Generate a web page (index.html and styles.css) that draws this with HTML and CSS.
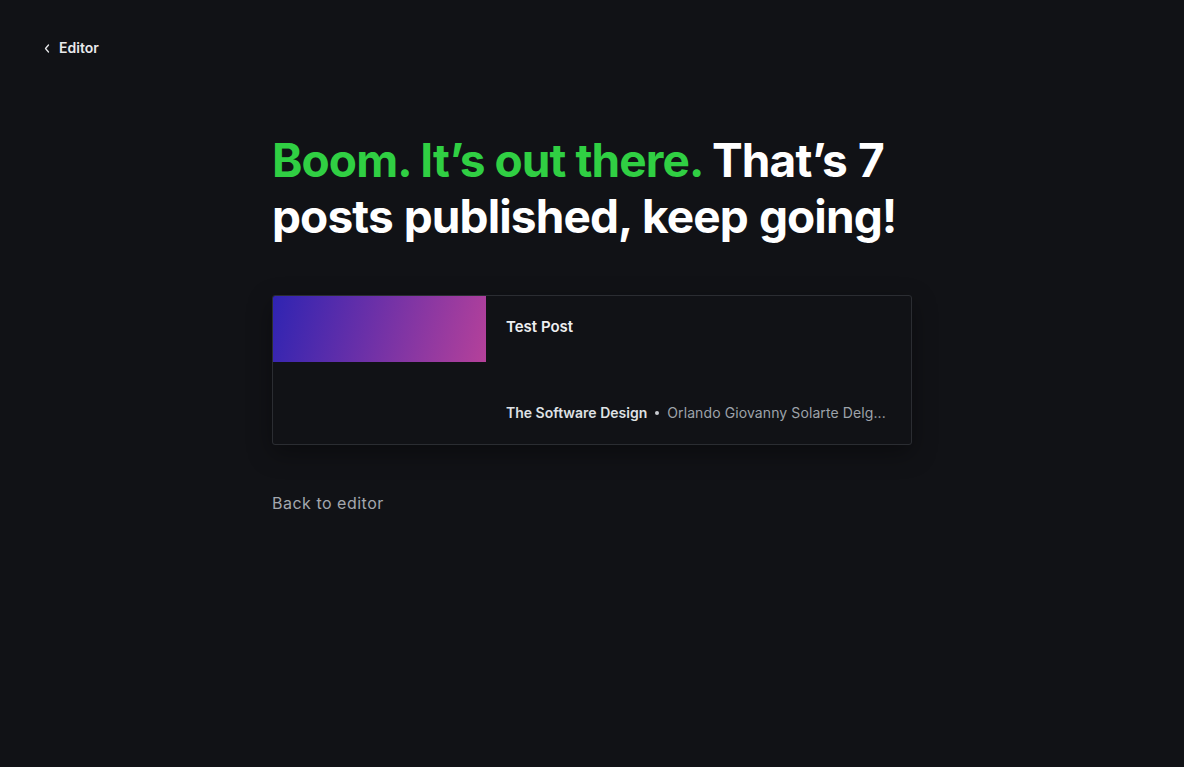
FILE: index.html
```html
<!DOCTYPE html>
<html>
<head>
<meta charset="utf-8">
<link rel="stylesheet" href="styles.css">
</head>
<body>
<div class="page">
  <header class="topbar">
    <a class="back-link" href="#">
      <svg class="chev" width="6" height="9" viewBox="0 0 6 9"><path d="M4.5 1 L1.5 4.5 L4.5 8" fill="none" stroke="#e6e7e9" stroke-width="1.3" stroke-linecap="round" stroke-linejoin="round"/></svg>
      <span>Editor</span>
    </a>
  </header>
  <main class="main">
    <h1 class="headline"><span class="green">Boom. It’s out there. </span><span class="white">That’s 7 posts published, keep going!</span></h1>
    <div class="card">
      <div class="thumb-col"><div class="thumb"></div></div>
      <div class="card-body">
        <div class="card-title">Test Post</div>
        <div class="card-meta"><span class="pub">The Software Design</span><span class="dot"></span><span class="author">Orlando Giovanny Solarte Delg...</span></div>
      </div>
    </div>
    <a class="back-editor" href="#">Back to editor</a>
  </main>
</div>
</body>
</html>
```
FILE: styles.css
```css
html, body {
  margin: 0;
  padding: 0;
  background: #111216;
  height: 100%;
}
body {
  font-family: Inter, "Noto Sans", sans-serif;
  color: #ffffff;
}
a { text-decoration: none; }
.page {
  min-height: 767px;
}
.topbar {
  padding: 37px 0 0 44px;
  height: 21px;
}
.back-link {
  display: inline-flex;
  align-items: center;
  gap: 9px;
  color: #e8e9eb;
  font-size: 14px;
  font-weight: 600;
  line-height: 18px;
}
.chev { margin-top: 1px; }
.main {
  width: 640px;
  margin: 0 auto;
  padding-top: 74px;
}
.headline {
  margin: 0;
  font-size: 46px;
  line-height: 56px;
  font-weight: 700;
  letter-spacing: -0.9px;
  color: #ffffff;
}
.green { color: #30cf43; }
.white { color: #ffffff; word-spacing: 1px; }
.card {
  margin-top: 51px;
  border: 1px solid #2b2d32;
  border-radius: 3px;
  display: flex;
  height: 148px;
  box-shadow: 0 8px 24px rgba(0,0,0,0.35);
  overflow: hidden;
}
.thumb-col {
  width: 213px;
  flex: none;
}
.thumb {
  height: 66px;
  background: linear-gradient(105deg, #2f24b2 0%, #6b30a8 45%, #b5419a 100%);
}
.card-body {
  flex: 1;
  padding: 21px 24px 21px 20px;
  display: flex;
  flex-direction: column;
  justify-content: space-between;
  min-width: 0;
}
.card-title {
  font-size: 15px;
  font-weight: 600;
  line-height: 20px;
  color: #eeeff1;
}
.card-meta {
  display: flex;
  align-items: center;
  font-size: 14px;
  line-height: 20px;
  white-space: nowrap;
  overflow: hidden;
}
.pub {
  font-weight: 600;
  color: #dfe1e4;
}
.dot {
  width: 4px;
  height: 4px;
  border-radius: 50%;
  background: #c9ccd1;
  margin: 0 8px;
  flex: none;
}
.author {
  color: #9ea3aa;
  overflow: hidden;
  text-overflow: ellipsis;
  letter-spacing: 0.1px;
}
.back-editor {
  display: inline-block;
  margin-top: 47px;
  font-size: 16px;
  line-height: 22px;
  letter-spacing: 0.5px;
  color: #a3a7ae;
}
```
